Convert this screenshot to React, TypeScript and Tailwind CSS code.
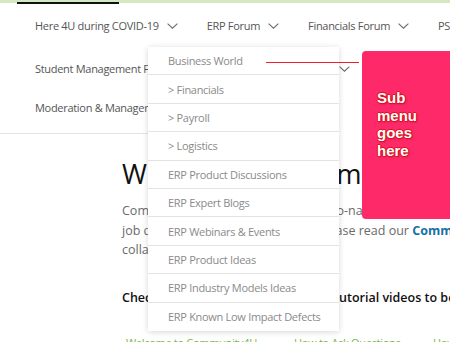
import React from "react";

const Chevron = () => (
    <svg width="11" height="6" viewBox="0 0 11 6" className="shrink-0">
        <polyline points="0.6,0.6 5.5,5.2 10.4,0.6" fill="none" stroke="#6b6b6b" strokeWidth="1.1" />
    </svg>
);

const NavItem = ({ label }: { label: string }) => (
    <div className="flex items-center gap-[8px] mr-[29px] shrink-0 whitespace-nowrap">
        <span>{label}</span>
        <Chevron />
    </div>
);

const menuItems = [
    "Business World",
    "> Financials",
    "> Payroll",
    "> Logistics",
    "ERP Product Discussions",
    "ERP Expert Blogs",
    "ERP Webinars & Events",
    "ERP Product Ideas",
    "ERP Industry Models Ideas",
    "ERP Known Low Impact Defects",
];

export default function App() {
    return (
        <div className="relative w-[450px] h-[342px] overflow-hidden bg-white font-['Open_Sans',sans-serif]">
            {/* top strip */}
            <div className="relative h-[4px]">
                <div className="h-[3px] bg-[#d3e9c2]" />
                <div className="absolute left-[17px] top-[2px] w-[102px] h-[2px] bg-[#111]" />
            </div>

            {/* main nav */}
            <nav className="pl-[35px] text-[11px] tracking-[-0.3px] text-[#555]">
                <div className="flex h-[44px] items-center">
                    <NavItem label="Here 4U during COVID-19" />
                    <NavItem label="ERP Forum" />
                    <NavItem label="Financials Forum" />
                    <NavItem label="PSA Forum" />
                </div>
                <div className="flex h-[42px] items-center">
                    <NavItem label="Student Management Forum" />
                    <NavItem label="Timetabling and Exam" />
                </div>
                <div className="flex h-[36px] items-center">
                    <NavItem label="Moderation & Management" />
                </div>
                <div className="h-[7px]" />
            </nav>
            <div className="w-[339px] h-px bg-[#e4e4e4]" />

            {/* page body */}
            <main className="pl-[122px] w-[700px]">
                <h1 className="mt-[25px] text-[27px] leading-[30px] text-[#111] whitespace-nowrap">
                    Welcome to Community4U!
                </h1>
                <p className="mt-[12px] text-[12.5px] leading-[19.5px] text-[#6a6a6a] whitespace-nowrap">
                    <span className="block">Community4U is truly your place to co-navigate the ERP world together.</span>
                    <span className="block">
                        job done, we'd kindly urge you to please read our{" "}
                        <span className="font-bold text-[#1570a6]">Community Guidelines</span>
                    </span>
                    <span className="block">collaborate.</span>
                </p>
                <h2 className="mt-[28px] text-[12.5px] leading-[20px] font-semibold text-[#111] whitespace-nowrap">
                    Check out the short Community4U tutorial videos to become an expert
                </h2>
            </main>
            <div className="flex mt-[26px] ml-[126px] text-[11px] tracking-[-0.3px] leading-[18px] text-[#7ab648] whitespace-nowrap">
                <span className="w-[168px] shrink-0">Welcome to Community4U</span>
                <span className="w-[139px] shrink-0">How to Ask Questions</span>
                <span className="shrink-0">How to Write Blog Posts</span>
            </div>

            {/* dropdown menu */}
            <ul className="absolute left-[148px] top-[47px] w-[191px] bg-white shadow-[0_1px_6px_rgba(0,0,0,0.16)] text-[11px] tracking-[-0.3px] text-[#8a8a8a]">
                {menuItems.map((item, i) => (
                    <li
                        key={item}
                        className={`h-[28.4px] flex items-center pl-[20px] pt-[1.5px] whitespace-nowrap ${i < menuItems.length - 1 ? "border-b border-[#e3e3e3]" : ""}`}
                    >
                        {item}
                    </li>
                ))}
            </ul>

            {/* annotation */}
            <div className="absolute left-[266px] top-[62px] w-[93px] h-px bg-[#f01e2e]" />
            <div className="absolute left-[362px] top-[51px] w-[100px] h-[168px] rounded-[4px] bg-[#fe2968] pl-[15px] pt-[38px]">
                <div className="font-['Liberation_Sans',Arial,sans-serif] font-bold text-[15px] leading-[17.5px] text-white [text-shadow:1px_0_0_#e0101c,-1px_0_0_#e0101c,0_1px_0_#e0101c,0_-1px_0_#e0101c,1px_1px_2px_rgba(80,0,0,0.5)]">
                    Sub
                    <br />
                    menu
                    <br />
                    goes
                    <br />
                    here
                </div>
            </div>
        </div>
    );
}
